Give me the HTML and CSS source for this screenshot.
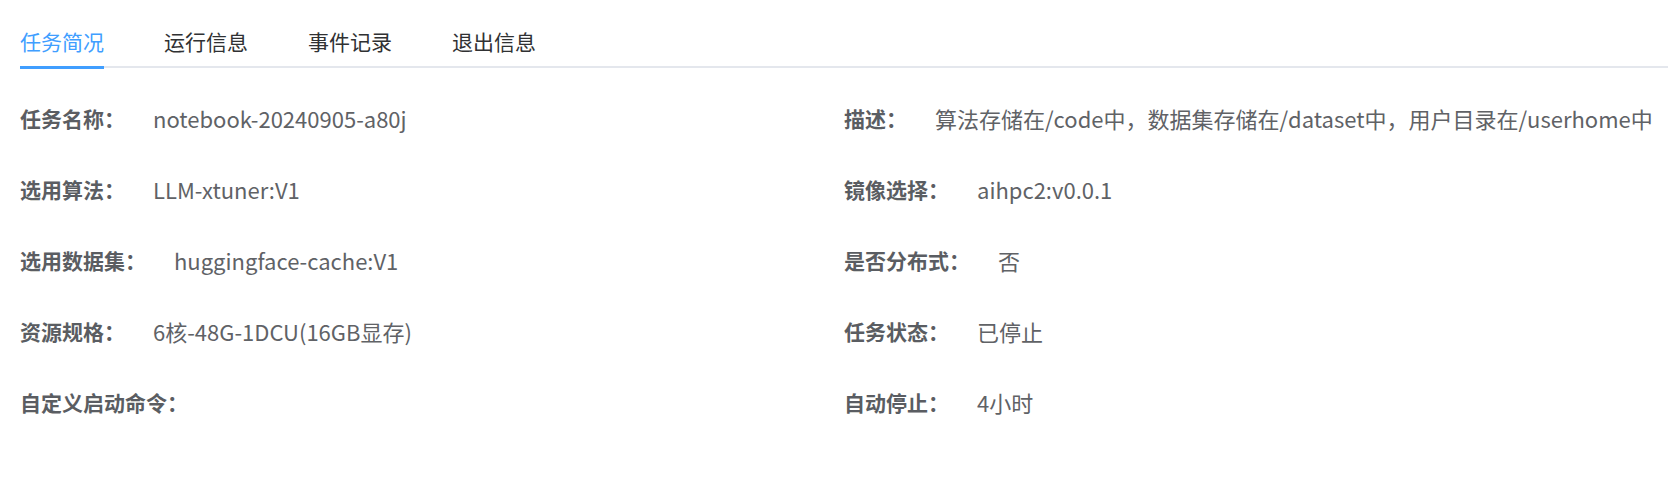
FILE: index.html
```html
<!DOCTYPE html>
<html lang="zh-CN">
<head>
<meta charset="utf-8">
<title>任务详情</title>
<link rel="stylesheet" href="styles.css">
</head>
<body>
<div class="page">
  <div class="tabs">
    <div class="tab active">任务简况</div>
    <div class="tab">运行信息</div>
    <div class="tab">事件记录</div>
    <div class="tab">退出信息</div>
  </div>
  <div class="info">
    <div class="item"><span class="label">任务名称：</span><span class="value">notebook-20240905-a80j</span></div>
    <div class="item"><span class="label">描述：</span><span class="value">算法存储在/code中，数据集存储在/dataset中，用户目录在/userhome中</span></div>
    <div class="item"><span class="label">选用算法：</span><span class="value">LLM-xtuner:V1</span></div>
    <div class="item"><span class="label">镜像选择：</span><span class="value">aihpc2:v0.0.1</span></div>
    <div class="item"><span class="label">选用数据集：</span><span class="value">huggingface-cache:V1</span></div>
    <div class="item"><span class="label">是否分布式：</span><span class="value">否</span></div>
    <div class="item"><span class="label">资源规格：</span><span class="value">6核-48G-1DCU(16GB显存)</span></div>
    <div class="item"><span class="label">任务状态：</span><span class="value">已停止</span></div>
    <div class="item"><span class="label">自定义启动命令：</span><span class="value"></span></div>
    <div class="item"><span class="label">自动停止：</span><span class="value">4小时</span></div>
  </div>
</div>
</body>
</html>
```

FILE: styles.css
```css
html, body {
  margin: 0;
  padding: 0;
  background: #ffffff;
}

body {
  font-family: "Noto Sans CJK SC", "Noto Sans", sans-serif;
  font-size: 21px;
  color: #606266;
}

.page {
  padding: 16px 10px 0 20px;
}

.tabs {
  display: flex;
  gap: 60px;
  height: 50px;
  border-bottom: 2px solid #e4e7ed;
}

.tab {
  position: relative;
  line-height: 50px;
  color: #303133;
  white-space: nowrap;
}

.tab.active {
  color: #409eff;
}

.tab.active::after {
  content: "";
  position: absolute;
  left: 0;
  right: 0;
  bottom: -3px;
  height: 3px;
  background: #409eff;
}

.info {
  display: grid;
  grid-template-columns: 1fr 1fr;
  grid-auto-rows: 71px;
  margin-top: 14px;
}

.item {
  display: flex;
  align-items: center;
  white-space: nowrap;
  line-height: 30px;
}

.label {
  font-weight: 700;
  color: #5a5d62;
  margin-right: 28px;
}

.value {
  font-size: 22px;
  color: #606266;
}
```
